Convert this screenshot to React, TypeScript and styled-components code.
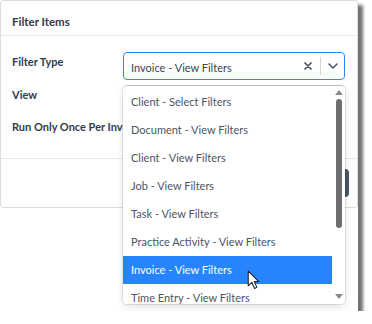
import React from "react";
import styled, { createGlobalStyle } from "styled-components";

const options = [
  "Client - Select Filters",
  "Document - View Filters",
  "Client - View Filters",
  "Job - View Filters",
  "Task - View Filters",
  "Practice Activity - View Filters",
  "Invoice - View Filters",
  "Time Entry - View Filters",
];

const selected = "Invoice - View Filters";

function App() {
  return (
    <>
      <GlobalStyle />
      <Shot>
        <Modal>
          <Header>Filter Items</Header>
          <Body>
            <Row>
              <Label>Filter Type</Label>
              <SelectWrap>
                <SelectBox $focused>
                  <Value>{selected}</Value>
                  <Indicators>
                    <IconButton>
                      <svg width="8" height="8" viewBox="0 0 8 8">
                        <path
                          d="M1 1 L7 7 M7 1 L1 7"
                          stroke="#4b5260"
                          strokeWidth="1.7"
                          strokeLinecap="round"
                        />
                      </svg>
                    </IconButton>
                    <Separator />
                    <IconButton>
                      <svg width="10" height="6" viewBox="0 0 10 6">
                        <path
                          d="M1 1 L5 5 L9 1"
                          stroke="#4b5260"
                          strokeWidth="1.5"
                          fill="none"
                          strokeLinecap="round"
                          strokeLinejoin="round"
                        />
                      </svg>
                    </IconButton>
                  </Indicators>
                </SelectBox>
                <Menu>
                  <MenuList>
                    {options.map((o) => (
                      <Option key={o} $active={o === selected}>
                        {o}
                      </Option>
                    ))}
                  </MenuList>
                  <ScrollTrack>
                    <Arrow viewBox="0 0 8 5">
                      <path d="M0 5 L4 0 L8 5 Z" fill="#8a8a8a" />
                    </Arrow>
                    <Thumb />
                    <Arrow viewBox="0 0 8 5">
                      <path d="M0 0 L8 0 L4 5 Z" fill="#8a8a8a" />
                    </Arrow>
                  </ScrollTrack>
                </Menu>
              </SelectWrap>
            </Row>
            <Row>
              <Label>View</Label>
              <SelectBox />
            </Row>
            <Row>
              <Label>Run Only Once Per Invoice</Label>
              <SelectBox />
            </Row>
          </Body>
          <Footer>
            <DarkButton>Save</DarkButton>
          </Footer>
        </Modal>
        <Cursor width="13" height="20" viewBox="0 0 12 19">
          <path
            d="M1 1 L1 15 L4.5 11.8 L7 17.5 L9.2 16.5 L6.8 11 L11 11 Z"
            fill="#fff"
            stroke="#222"
            strokeWidth="1"
            strokeLinejoin="round"
          />
        </Cursor>
      </Shot>
    </>
  );
}

const GlobalStyle = createGlobalStyle`
  body {
    margin: 0;
    background: #fff;
    font-family: Lato, "Open Sans", "Liberation Sans", sans-serif;
  }
`;

const Shot = styled.div`
  position: relative;
  width: 358px;
  height: 311px;
  background: #fff;
  box-shadow: 5px 5px 3px rgba(0, 0, 0, 0.55);
`;

const Modal = styled.div`
  box-sizing: border-box;
  width: 358px;
  height: 208px;
  border: 1px solid #dcdcdc;
  border-radius: 3px;
  background: #fff;
  display: flex;
  flex-direction: column;
`;

const Header = styled.div`
  height: 35px;
  box-sizing: border-box;
  padding: 14px 11px 0;
  font-size: 11.5px;
  font-weight: 700;
  color: #2f3b4c;
  border-bottom: 1px solid #e6e6e6;
`;

const Body = styled.div`
  padding: 16px 12px 13px 11px;
  display: flex;
  flex-direction: column;
  gap: 4.5px;
  border-bottom: 1px solid #e6e6e6;
`;

const Row = styled.div`
  display: flex;
  align-items: flex-start;
  height: 28px;
`;

const Label = styled.div`
  width: 111px;
  flex-shrink: 0;
  white-space: nowrap;
  line-height: 20px;
  font-size: 11px;
  font-weight: 700;
  color: #2f3b4c;
`;

const SelectWrap = styled.div`
  position: relative;
  z-index: 2;
`;

const SelectBox = styled.div<{ $focused?: boolean }>`
  box-sizing: border-box;
  width: 222px;
  height: 28px;
  display: flex;
  align-items: center;
  padding-left: 7px;
  border: 1px solid ${(p) => (p.$focused ? "#2f86f6" : "#cfcfcf")};
  border-radius: 4px;
  background: #fff;
`;

const Value = styled.div`
  flex: 1;
  font-size: 11px;
  color: #3b4452;
  padding-top: 3px;
`;

const Indicators = styled.div`
  display: flex;
  align-items: center;
  height: 100%;
`;

const IconButton = styled.div`
  width: 22px;
  display: flex;
  align-items: center;
  justify-content: center;
`;

const Separator = styled.div`
  width: 1px;
  height: 18px;
  background: #d6d6d6;
  margin: 0 1px;
`;

const Menu = styled.div`
  position: absolute;
  top: 34px;
  left: 0;
  width: 222px;
  height: 218px;
  display: flex;
  background: #fff;
  border-radius: 4px;
  overflow: hidden;
  box-shadow: 0 0 0 1px rgba(0, 0, 0, 0.08), 0 3px 8px rgba(0, 0, 0, 0.12);
`;

const MenuList = styled.div`
  flex: 1;
  padding-top: 2px;
  overflow: hidden;
`;

const Option = styled.div<{ $active?: boolean }>`
  height: 28px;
  line-height: 28px;
  padding-left: 8px;
  font-size: 11px;
  white-space: nowrap;
  color: ${(p) => (p.$active ? "#fff" : "#4a5566")};
  background: ${(p) => (p.$active ? "#2684ff" : "transparent")};
`;

const ScrollTrack = styled.div`
  width: 13px;
  display: flex;
  flex-direction: column;
  align-items: center;
  padding: 4px 0 5px;
  box-sizing: border-box;
`;

const Arrow = styled.svg`
  width: 8px;
  height: 5px;
  flex-shrink: 0;
`;

const Thumb = styled.div`
  width: 6px;
  height: 129px;
  margin-top: 4px;
  margin-bottom: auto;
  border-radius: 3px;
  background: #6e6e6e;
`;

const Footer = styled.div`
  flex: 1;
  display: flex;
  align-items: center;
  justify-content: flex-end;
  padding-right: 8px;
`;

const DarkButton = styled.div`
  height: 28px;
  padding: 0 24px;
  line-height: 28px;
  border-radius: 4px;
  background: #4b5563;
  color: #fff;
  font-size: 11px;
`;

const Cursor = styled.svg`
  position: absolute;
  left: 247px;
  top: 270px;
  z-index: 5;
`;

export default App;
